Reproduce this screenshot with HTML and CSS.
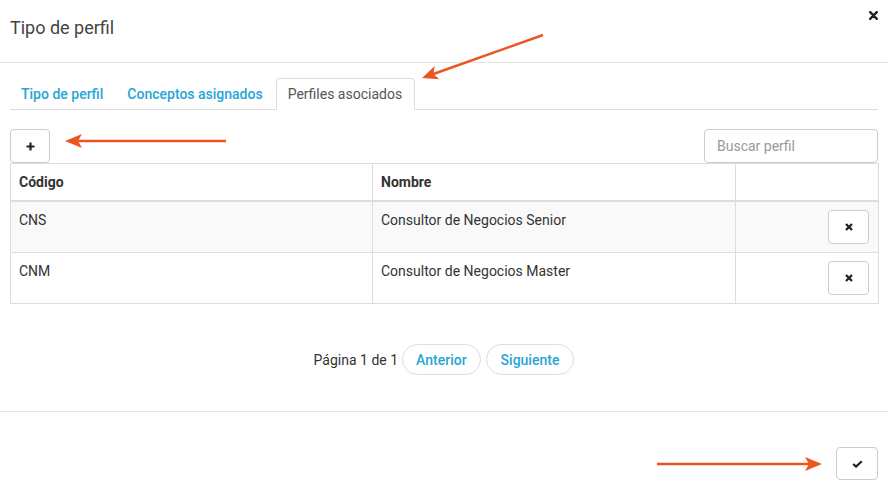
FILE: index.html
```html
<!DOCTYPE html>
<html lang="es">
<head>
<meta charset="utf-8">
<title>Tipo de perfil</title>
<link rel="stylesheet" href="styles.css">
</head>
<body>
<div class="modal">
  <header class="modal-header">
    <h4 class="modal-title">Tipo de perfil</h4>
    <button class="close" type="button" aria-label="Cerrar">
      <svg width="9" height="9" viewBox="0 0 9 9"><path d="M1.2 1.2 L7.8 7.8 M7.8 1.2 L1.2 7.8" stroke="#222" stroke-width="2.4" stroke-linecap="round"/></svg>
    </button>
  </header>

  <div class="modal-body">
    <ul class="tabs">
      <li class="tab"><a>Tipo de perfil</a></li>
      <li class="tab"><a>Conceptos asignados</a></li>
      <li class="tab active"><a>Perfiles asociados</a></li>
    </ul>

    <div class="toolbar">
      <button class="btn btn-icon" type="button" aria-label="Agregar">
        <svg width="9" height="9" viewBox="0 0 9 9"><path d="M4.5 0.5 V8.5 M0.5 4.5 H8.5" stroke="#222" stroke-width="2.2"/></svg>
      </button>
      <input class="search" type="text" placeholder="Buscar perfil">
    </div>

    <table class="grid">
      <colgroup>
        <col class="c1"><col class="c2"><col class="c3">
      </colgroup>
      <thead>
        <tr><th>Código</th><th>Nombre</th><th></th></tr>
      </thead>
      <tbody>
        <tr class="odd">
          <td>CNS</td>
          <td>Consultor de Negocios Senior</td>
          <td class="actions"><button class="btn btn-icon btn-del" type="button" aria-label="Eliminar"><svg width="8" height="8" viewBox="0 0 8 8"><path d="M1 1 L7 7 M7 1 L1 7" stroke="#222" stroke-width="2.3"/></svg></button></td>
        </tr>
        <tr>
          <td>CNM</td>
          <td>Consultor de Negocios Master</td>
          <td class="actions"><button class="btn btn-icon btn-del" type="button" aria-label="Eliminar"><svg width="8" height="8" viewBox="0 0 8 8"><path d="M1 1 L7 7 M7 1 L1 7" stroke="#222" stroke-width="2.3"/></svg></button></td>
        </tr>
      </tbody>
    </table>

    <div class="pager">
      <span class="pager-label">Página 1 de 1</span>
      <button class="pill" type="button">Anterior</button>
      <button class="pill pill-wide" type="button">Siguiente</button>
    </div>
  </div>

  <footer class="modal-footer">
    <button class="btn btn-ok" type="button" aria-label="Aceptar">
      <svg width="11" height="8" viewBox="0 0 11 8"><path d="M1.2 4 L4 6.6 L9.8 1.2" fill="none" stroke="#222" stroke-width="2.2"/></svg>
    </button>
  </footer>

  <svg class="annotations" width="889" height="490" viewBox="0 0 889 490">
    <g fill="#ec5421" stroke="#ec5421">
      <line x1="543" y1="35" x2="432" y2="74.5" stroke-width="2.5"/>
      <polygon points="422,78 434.8,66 433.3,74 439.4,79.2" stroke="none"/>
      <line x1="226" y1="141" x2="76" y2="141" stroke-width="2.5"/>
      <polygon points="65,141 82,134 78,141 82,148" stroke="none"/>
      <line x1="657" y1="464" x2="811" y2="464" stroke-width="2.5"/>
      <polygon points="822,464 805,457 809,464 805,471" stroke="none"/>
    </g>
  </svg>
</div>
</body>
</html>
```

FILE: styles.css
```css
* { box-sizing: border-box; }

html, body {
  margin: 0;
  padding: 0;
  background: #fff;
}

body {
  font-family: Roboto, "Liberation Sans", Arial, sans-serif;
  font-size: 14px;
  line-height: 20px;
  color: #333;
}

.modal {
  position: relative;
  width: 889px;
  height: 490px;
  overflow: hidden;
}

.modal-header {
  display: flex;
  justify-content: space-between;
  align-items: flex-start;
  height: 63px;
  padding: 15px 11px 0 10px;
  border-bottom: 1px solid #e5e5e5;
}

.modal-title {
  margin: 0;
  font-size: 18px;
  line-height: 25px;
  font-weight: 400;
  color: #444;
}

.close {
  margin-top: -5px;
  padding: 0;
  border: 0;
  background: none;
  width: 10px;
  height: 10px;
  display: flex;
  align-items: center;
  justify-content: center;
}

.modal-body {
  padding: 15px 11px 36px 10px;
}

.tabs {
  display: flex;
  list-style: none;
  margin: 0;
  padding: 0;
  border-bottom: 1px solid #ddd;
}

.tab {
  margin: 0 2px -1px 0;
}

.tab a {
  display: block;
  padding: 5px 10px;
  line-height: 20px;
  border: 1px solid transparent;
  border-radius: 4px 4px 0 0;
  color: #27a5d6;
  font-weight: 500;
}

.tab.active a {
  padding: 5px 12px 5px 11px;
  color: #555;
  font-weight: 400;
  background: #fff;
  border-color: #ddd #ddd transparent;
}

.toolbar {
  display: flex;
  justify-content: space-between;
  align-items: flex-end;
  margin-top: 19px;
}

.btn {
  display: inline-flex;
  align-items: center;
  justify-content: center;
  padding: 0;
  background: #fff;
  border: 1px solid #ccc;
  border-radius: 4px;
}

.btn-icon {
  width: 40px;
  height: 34px;
}

.btn-del {
  width: 41px;
  margin-right: 1px;
}

.search {
  width: 174px;
  height: 34px;
  padding: 0 12px;
  border: 1px solid #ccc;
  border-radius: 4px;
  font-family: inherit;
  font-size: 14px;
  color: #555;
  outline: none;
}

.search::placeholder {
  color: #999;
}

.grid {
  width: 868px;
  border-collapse: collapse;
  border: 1px solid #ddd;
  table-layout: fixed;
}

.c1 { width: 362px; }
.c2 { width: 363px; }
.c3 { width: 143px; }

.grid th,
.grid td {
  padding: 8px;
  line-height: 20px;
  text-align: left;
  vertical-align: top;
  border: 1px solid #ddd;
}

.grid th {
  font-weight: 700;
  border-bottom-width: 2px;
}

.grid tr.odd td {
  background: #f9f9f9;
}

.grid td.actions {
  text-align: right;
}

.pager {
  display: flex;
  justify-content: center;
  align-items: center;
  gap: 5px;
  margin-top: 40px;
}

.pager-label {
  margin-right: -1px;
}

.pill {
  height: 31px;
  padding: 0 13px;
  border: 1px solid #ddd;
  border-radius: 16px;
  background: #fff;
  color: #27a5d6;
  font-family: inherit;
  font-size: 14px;
  font-weight: 500;
}

.pill-wide {
  padding: 0 14px;
}

.modal-footer {
  display: flex;
  justify-content: flex-end;
  padding: 35px 11px 0 10px;
  border-top: 1px solid #e5e5e5;
}

.btn-ok {
  width: 42px;
  height: 33px;
}

.annotations {
  position: absolute;
  left: 0;
  top: 0;
  pointer-events: none;
}
```
